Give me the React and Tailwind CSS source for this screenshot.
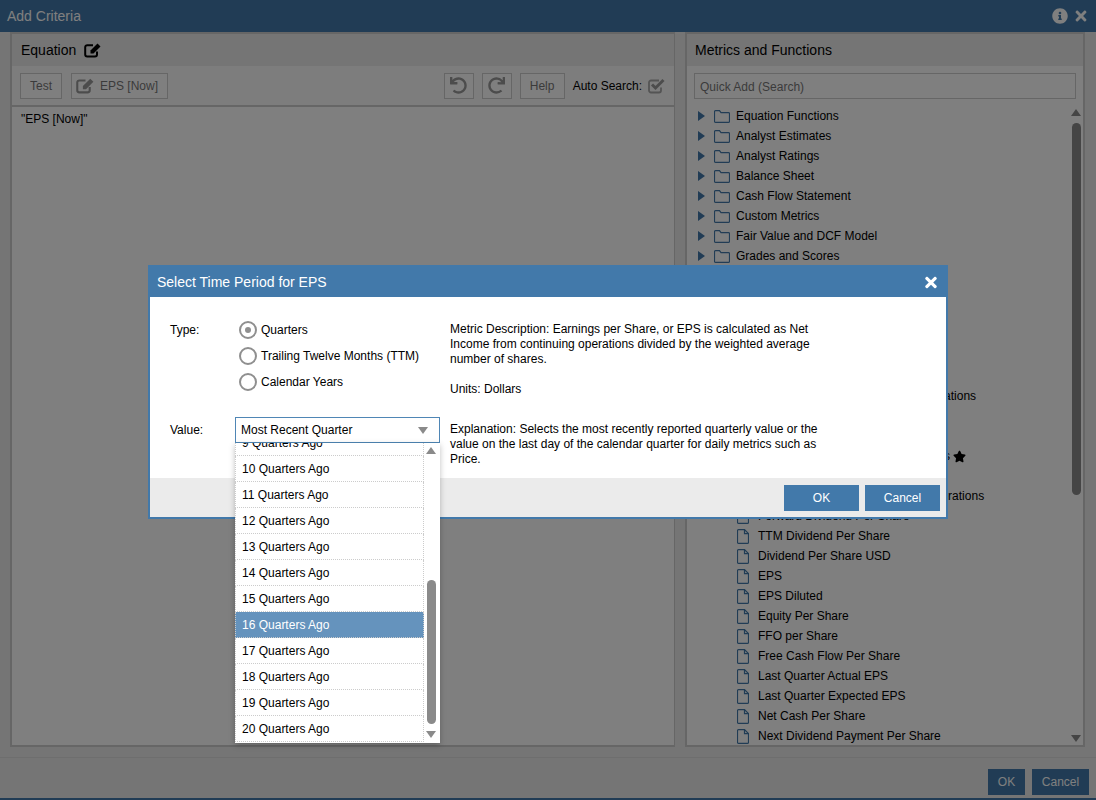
import React from "react";
import { FaUndo, FaRedo, FaInfoCircle, FaTimes, FaStar } from "react-icons/fa";

const folders = [
  "Equation Functions",
  "Analyst Estimates",
  "Analyst Ratings",
  "Balance Sheet",
  "Cash Flow Statement",
  "Custom Metrics",
  "Fair Value and DCF Model",
  "Grades and Scores",
  "Growth",
  "Income Statement",
  "Liquidity",
  "Ownership",
  "Per Share Data",
  "Price and Returns",
];

const hiddenRows = [
  { name: "Normalized EPS - Continuing Operations" },
  { name: "Book Value Per Share" },
  { name: "Cash Per Share" },
  { name: "Basic EPS Excluding All Extra Items", star: true },
  { name: "Earnings Per Share" },
  { name: "Earnings per Share Continuing Operations" },
  { name: "Forward Dividend Per Share" },
];

const files = [
  "TTM Dividend Per Share",
  "Dividend Per Share USD",
  "EPS",
  "EPS Diluted",
  "Equity Per Share",
  "FFO per Share",
  "Free Cash Flow Per Share",
  "Last Quarter Actual EPS",
  "Last Quarter Expected EPS",
  "Net Cash Per Share",
  "Next Dividend Payment Per Share",
];

const quarters = [9, 10, 11, 12, 13, 14, 15, 16, 17, 18, 19, 20];

const FolderIcon = () => (
  <svg width="16" height="13" viewBox="0 0 16 13" fill="none" stroke="#4279aa" strokeWidth="1.2">
    <path d="M1.5 0.6h4l1.5 2h7.5a1 1 0 0 1 1 1v7.8a1 1 0 0 1-1 1h-13a1 1 0 0 1-1-1v-9.8a1 1 0 0 1 1-1z" />
  </svg>
);

const FileIcon = () => (
  <svg width="12" height="15" viewBox="0 0 12 15" fill="none" stroke="#4279aa" strokeWidth="1.2">
    <path d="M1.5 0.6h6l4 4v8.8a1 1 0 0 1-1 1h-9a1 1 0 0 1-1-1v-11.8a1 1 0 0 1 1-1z" />
    <path d="M7.5 0.6v4h4" />
  </svg>
);

// pencil in a box, heavier than the package versions
const EditIcon = ({ color, width, height }) => (
  <svg width={width} height={height} viewBox="0 0 18 16">
    <path
      d="M13 9.5V12.5a2 2 0 0 1-2 2H3.2a2 2 0 0 1-2-2V5.2a2 2 0 0 1 2-2H9"
      fill="none"
      stroke={color}
      strokeWidth="2"
    />
    <path d="M6.5 8.5L13.5 1.5l3 3-7 7h-3z" fill={color} />
  </svg>
);

const CheckBoxIcon = () => (
  <svg width="17" height="16" viewBox="0 0 17 16">
    <path
      d="M13 9.5V12.5a2 2 0 0 1-2 2H3a2 2 0 0 1-2-2V4.5a2 2 0 0 1 2-2h8"
      fill="none"
      stroke="#a8a8a8"
      strokeWidth="1.8"
    />
    <path d="M4 6.5l3.5 3.5 8-8" fill="none" stroke="#999" strokeWidth="3" />
  </svg>
);

const Triangle = ({ down, className }) => (
  <svg width="10" height="7" viewBox="0 0 10 7" className={className}>
    <path d={down ? "M0 0h10L5 7z" : "M0 7h10L5 0z"} fill="#8a8a8a" />
  </svg>
);

const Radio = ({ checked, label }) => (
  <div className="flex items-center h-[26px]">
    <div className="w-[18px] h-[18px] rounded-full border-2 border-[#8f8f8f] bg-white flex items-center justify-center">
      {checked && <div className="w-[6px] h-[6px] rounded-full bg-[#8f8f8f]" />}
    </div>
    <span className="ml-[4px]">{label}</span>
  </div>
);

const ToolButton = ({ className, children }) => (
  <button className={"h-[26px] border border-[#ccc] bg-white text-[#777] flex items-center justify-center " + className}>
    {children}
  </button>
);

const App = () => {
  return (
    <div className="relative w-[1096px] h-[800px] overflow-hidden bg-[#ebebeb] text-[12px] text-black font-['Liberation_Sans',Arial,sans-serif]">
      {/* main window underneath */}
      <div className="flex flex-col h-full border-b-2 border-[#4279aa]">
        <div className="h-[32px] shrink-0 bg-[#4279aa] flex items-center pl-[7px] pr-[8px]">
          <span className="text-[14px] text-white">Add Criteria</span>
          <FaInfoCircle className="ml-auto text-white w-[16px] h-[16px]" />
          <FaTimes className="ml-[6px] text-white w-[14px] h-[16px]" />
        </div>

        <div className="flex-1 min-h-0 flex gap-[10px] pl-[10px] pr-[10px]">
          {/* equation */}
          <div className="w-[665px] h-[715px] bg-white border-2 border-[#ccc] border-r flex flex-col">
            <div className="h-[32px] shrink-0 bg-[#ebebeb] flex items-center pl-[9px] text-[14px]">
              Equation
              <span className="ml-[8px] flex"><EditIcon color="#000" width={18} height={16} /></span>
            </div>
            <div className="h-[41px] shrink-0 bg-[#fafafa] border-b-2 border-[#ccc] flex items-center pl-[8px] pr-[9px]">
              <ToolButton className="w-[42px]">Test</ToolButton>
              <ToolButton className="w-[97px] ml-[9px] justify-start! pl-[4px]">
                <EditIcon color="#999" width={19} height={17} />
                <span className="ml-[5px]">EPS [Now]</span>
              </ToolButton>
              <ToolButton className="w-[30px] ml-auto">
                <FaUndo className="w-[17px] h-[17px] text-[#999]" />
              </ToolButton>
              <ToolButton className="w-[30px] ml-[8px]">
                <FaRedo className="w-[17px] h-[17px] text-[#999]" />
              </ToolButton>
              <ToolButton className="w-[45px] ml-[8px]">Help</ToolButton>
              <span className="ml-[8px]">Auto Search:</span>
              <span className="ml-[6px] flex"><CheckBoxIcon /></span>
            </div>
            <div className="pl-[9px] pt-[3px]">"EPS [Now]"</div>
          </div>

          {/* metrics */}
          <div className="w-[400px] h-[715px] bg-white border-2 border-[#ccc] flex flex-col overflow-hidden">
            <div className="h-[32px] shrink-0 bg-[#ebebeb] flex items-center pl-[8px] text-[14px]">
              Metrics and Functions
            </div>
            <div className="pl-[7px] pr-[7px] pt-[7px]">
              <div className="h-[26px] border border-[#ccc] flex items-center pl-[5px] pt-[1px] text-[#777]">
                Quick Add (Search)
              </div>
            </div>
            <div className="relative flex-1 min-h-0 overflow-hidden pt-[7px]">
              {folders.map((name) => (
                <div key={name} className="h-[20px] flex items-center pl-[11px] whitespace-nowrap">
                  <svg width="7" height="10" viewBox="0 0 7 10">
                    <path d="M0 0l7 5-7 5z" fill="#4279aa" />
                  </svg>
                  <span className="ml-[9px] flex"><FolderIcon /></span>
                  <span className="ml-[6px]">{name}</span>
                </div>
              ))}
              {hiddenRows.map((row) => (
                <div key={row.name} className="h-[20px] flex items-center pl-[50px] whitespace-nowrap">
                  <FileIcon />
                  <span className="ml-[9px]">{row.name}</span>
                  {row.star && <FaStar className="ml-[3px] w-[13px] h-[13px]" />}
                </div>
              ))}
              {files.map((name) => (
                <div key={name} className="h-[20px] flex items-center pl-[50px] whitespace-nowrap">
                  <FileIcon />
                  <span className="ml-[9px]">{name}</span>
                </div>
              ))}
              <Triangle className="absolute right-[2px] top-[10px]" />
              <div className="absolute right-[2px] top-[24px] w-[9px] h-[372px] rounded-[5px] bg-[#8a8a8a]" />
              <Triangle down className="absolute right-[2px] bottom-[3px]" />
            </div>
          </div>
        </div>

        <div className="h-[41px] shrink-0 border-t border-[#ddd] flex items-center justify-end gap-[7px] pr-[7px] pt-[7px]">
          <button className="w-[37px] h-[26px] bg-[#4279aa] text-white">OK</button>
          <button className="w-[57px] h-[26px] bg-[#4279aa] text-white">Cancel</button>
        </div>
      </div>

      {/* dim layer */}
      <div className="absolute inset-0 bg-black/50" />

      {/* time period dialog */}
      <div className="absolute left-[148px] top-[265px] w-[800px] h-[254px] bg-white border-2 border-[#4279aa] flex flex-col">
        <div className="h-[30px] shrink-0 bg-[#4279aa] flex items-center pl-[7px] pr-[8px] text-white text-[14px]">
          Select Time Period for EPS
          <FaTimes className="ml-auto w-[14px] h-[17px]" />
        </div>
        <div className="flex-1 min-h-0 flex pl-[20px] pt-[20px]">
          <div className="w-[65px] shrink-0">
            <div className="h-[26px] flex items-center">Type:</div>
            <div className="h-[26px] flex items-center mt-[74px]">Value:</div>
          </div>
          <div className="w-[215px] shrink-0">
            <div className="pl-[4px] h-[78px]">
              <Radio checked label="Quarters" />
              <Radio label="Trailing Twelve Months (TTM)" />
              <Radio label="Calendar Years" />
            </div>
            <div className="mt-[22px] w-[205px] h-[26px] border border-[#4f86b5] flex items-center pl-[5px] pr-[11px]">
              Most Recent Quarter
              <Triangle down className="ml-auto" />
            </div>
          </div>
          <div className="w-[375px] shrink-0 leading-[15px] pt-[5px]">
            <p>
              Metric Description: Earnings per Share, or EPS is calculated as Net Income from continuing operations divided by the weighted average number of shares.
            </p>
            <p className="mt-[15px]">Units: Dollars</p>
            <p className="mt-[25px]">
              Explanation: Selects the most recently reported quarterly value or the value on the last day of the calendar quarter for daily metrics such as Price.
            </p>
          </div>
        </div>
        <div className="h-[39px] shrink-0 bg-[#ebebeb] flex items-start justify-end gap-[6px] pt-[7px] pr-[6px]">
          <button className="w-[75px] h-[26px] bg-[#4279aa] text-white">OK</button>
          <button className="w-[75px] h-[26px] bg-[#4279aa] text-white">Cancel</button>
        </div>
      </div>

      {/* open value dropdown */}
      <div className="absolute left-[235px] top-[443px] w-[205px] h-[300px] bg-white shadow-[0_2px_6px_rgba(0,0,0,0.25)] flex overflow-hidden">
        <div className="w-[189px] shrink-0 overflow-hidden">
          <div className="-mt-[13px]">
            {quarters.map((q) => (
              <div
                key={q}
                className={
                  "h-[26px] flex items-center pl-[6px] border-b border-x border-dotted border-[#ccc] " +
                  (q === 16 ? "bg-[#6593bd] text-white" : "")
                }
              >
                {q} Quarters Ago
              </div>
            ))}
          </div>
        </div>
        <div className="relative flex-1">
          <Triangle className="absolute left-[2px] top-[4px]" />
          <div className="absolute left-[3px] top-[137px] w-[9px] h-[144px] rounded-[5px] bg-[#8a8a8a]" />
          <Triangle down className="absolute left-[2px] bottom-[5px]" />
        </div>
      </div>
    </div>
  );
};

export default App;
